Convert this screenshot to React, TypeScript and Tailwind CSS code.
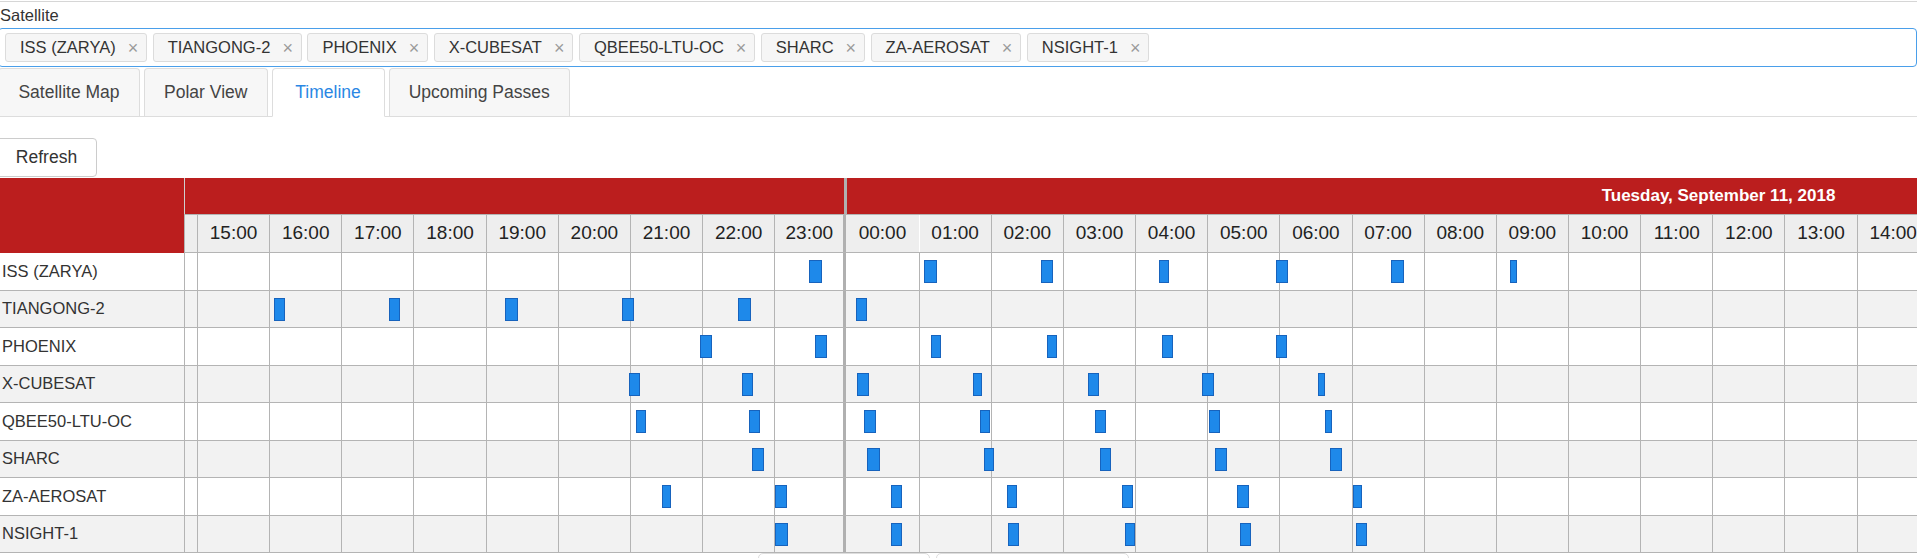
import React from "react";

const sats = [
  "ISS (ZARYA)",
  "TIANGONG-2",
  "PHOENIX",
  "X-CUBESAT",
  "QBEE50-LTU-OC",
  "SHARC",
  "ZA-AEROSAT",
  "NSIGHT-1",
];

const bars: number[][][] = [
  [[809, 821.6], [924, 936.7], [1040.8, 1052.7], [1159, 1169.4], [1276, 1287.7], [1391, 1404], [1510, 1516.8]],
  [[274, 284.5], [389, 400.4], [505, 517.6], [622, 633.5], [738, 751.4], [856, 866.5]],
  [[700, 711.8], [815, 826.5], [931, 940.8], [1047, 1056.7], [1162, 1172.7], [1276, 1286.5]],
  [[629, 640], [742, 752.7], [857, 868.6], [973, 981.6], [1088, 1098.8], [1202, 1213.5], [1318, 1324.7]],
  [[636, 645.7], [749, 759.6], [864, 875.5], [980, 990], [1095, 1105.7], [1209, 1220.4], [1325, 1332.4]],
  [[751.8, 764.5], [867, 879.6], [984, 993.5], [1100, 1110.6], [1215, 1226.5], [1330, 1341.8]],
  [[662, 671.4], [775, 786.5], [891, 901.6], [1007, 1016.7], [1122, 1132.7], [1237, 1248.6], [1353, 1361.7]],
  [[775, 787.8], [891, 902.4], [1008, 1018.8], [1125, 1134.7], [1240, 1251.4], [1356, 1366.5]],
];

const hoursA = ["15:00", "16:00", "17:00", "18:00", "19:00", "20:00", "21:00", "22:00", "23:00"];
const hoursB = [
  "00:00", "01:00", "02:00", "03:00", "04:00", "05:00", "06:00", "07:00",
  "08:00", "09:00", "10:00", "11:00", "12:00", "13:00", "14:00",
];

function Cells({ labels }: { labels?: boolean }) {
  return (
    <>
      <div className="h-full w-[13px] shrink-0 border-l border-[#b4b4b4]" />
      {hoursA.map((h, i) => (
        <div
          key={h}
          className={
            i === 8
              ? "flex h-full w-[69.17px] shrink-0 items-center justify-center border-l border-[#b4b4b4]"
              : "flex h-full w-[72.17px] shrink-0 items-center justify-center border-l border-[#b4b4b4]"
          }
        >
          {labels ? h : null}
        </div>
      ))}
      {hoursB.map((h, i) => (
        <div
          key={h}
          className={
            i === 0
              ? "flex h-full w-[75.17px] shrink-0 items-center justify-center border-l-[3px] border-[#b0b0b0]"
              : i === 1 && labels
              ? "flex h-full w-[72.17px] shrink-0 items-center justify-center border-l border-white"
              : "flex h-full w-[72.17px] shrink-0 items-center justify-center border-l border-[#b4b4b4]"
          }
        >
          {labels ? h : null}
        </div>
      ))}
    </>
  );
}

export default function App() {
  return (
    <div className="h-[558px] w-full overflow-hidden bg-white font-['Liberation_Sans',Arial,sans-serif] text-[#333]">
      {/* top edge of previous panel */}
      <div className="mt-[1px] h-[1px] w-full bg-[#d6d6d6]" />

      <div className="-ml-[2px] w-[calc(100%+2px)]">
        <div className="mt-[3px] h-[20px] pl-[2px] text-[16.5px] leading-[20px] text-[#333]">Satellite</div>

        {/* multi select */}
        <div className="mt-[3px] flex h-[39px] items-center gap-[5.5px] rounded-[4px] border border-[#4a9fea] pl-[6px]">
          {sats.map((s) => (
            <div
              key={s}
              className="flex h-[29px] items-center rounded-[3px] border border-[#dcdcdc] bg-[#f6f6f6] pl-[14px] pr-[8px] text-[16.5px] text-[#333]"
            >
              <span>{s}</span>
              <span className="ml-[12px] text-[18px] leading-none text-[#9a9a9a]">×</span>
            </div>
          ))}
        </div>

        {/* tabs */}
        <div className="flex h-[50px] items-end gap-[4px] border-b border-[#dddddd] text-[17.5px]">
          <div className="flex h-[48px] w-[142px] items-center justify-center rounded-t-[4px] border border-b-0 border-[#dddddd] bg-[#f7f7f7] text-[#444]">
            Satellite Map
          </div>
          <div className="flex h-[48px] w-[123.5px] items-center justify-center rounded-t-[4px] border border-b-0 border-[#dddddd] bg-[#f7f7f7] text-[#444]">
            Polar View
          </div>
          <div className="-mb-[1px] flex h-[49px] w-[113px] items-center justify-center rounded-t-[4px] border border-[#dddddd] border-b-white bg-white text-[#2a87e4]">
            Timeline
          </div>
          <div className="flex h-[48px] w-[181.5px] items-center justify-center rounded-t-[4px] border border-b-0 border-[#dddddd] bg-[#f7f7f7] text-[#444]">
            Upcoming Passes
          </div>
        </div>
      </div>

      {/* refresh */}
      <div className="mt-[21px] -ml-[4px] flex h-[39px] w-[101px] items-center justify-center rounded-[4px] border border-[#cccccc] bg-white text-[17.5px] text-[#333]">
        Refresh
      </div>

      {/* timeline chart */}
      <div className="mt-[1px] w-full overflow-hidden">
        <div className="flex">
          <div className="w-[184px] shrink-0 bg-[#bb1e1e]" />
          <div className="flex min-w-0 flex-1 flex-col overflow-hidden">
            <div className="flex h-[36px] bg-[#bb1e1e]">
              <div className="h-full w-[659.5px] shrink-0 border-l border-[#cfcfcf]" />
              <div className="flex h-full w-[1735px] shrink-0 items-center justify-center border-l-[3px] border-[#b0b0b0] pl-[12px] text-[17px] font-bold text-white">
                Tuesday, September 11, 2018
              </div>
            </div>
            <div className="flex h-[39px] border-y border-[#b4b4b4] bg-[#eeeeee] text-[19px] text-[#222]">
              <Cells labels />
            </div>
          </div>
        </div>

        {sats.map((s, r) => (
          <div
            key={s}
            className={
              r % 2 === 1
                ? "flex h-[37.5px] border-b border-[#b4b4b4] bg-[#f2f2f2]"
                : "flex h-[37.5px] border-b border-[#b4b4b4] bg-white"
            }
          >
            <div className="flex w-[184px] shrink-0 items-center pl-[2px] text-[16.5px] text-[#333]">{s}</div>
            <div className="relative flex min-w-0 flex-1 overflow-hidden">
              <Cells />
              {bars[r].map(([a, b], i) => (
                <div
                  key={i}
                  className="absolute top-[7px] h-[23px] border border-[#1763bd] bg-[#1e89ea]"
                  style={{ left: a - 184, width: b - a }}
                />
              ))}
            </div>
          </div>
        ))}
      </div>

      {/* partially visible controls below */}
      <div className="flex gap-[6px] pl-[758px]">
        <div className="h-[20px] w-[172px] rounded-t-[5px] border border-[#dddddd]" />
        <div className="h-[20px] w-[193px] rounded-t-[5px] border border-[#dddddd]" />
      </div>
    </div>
  );
}
